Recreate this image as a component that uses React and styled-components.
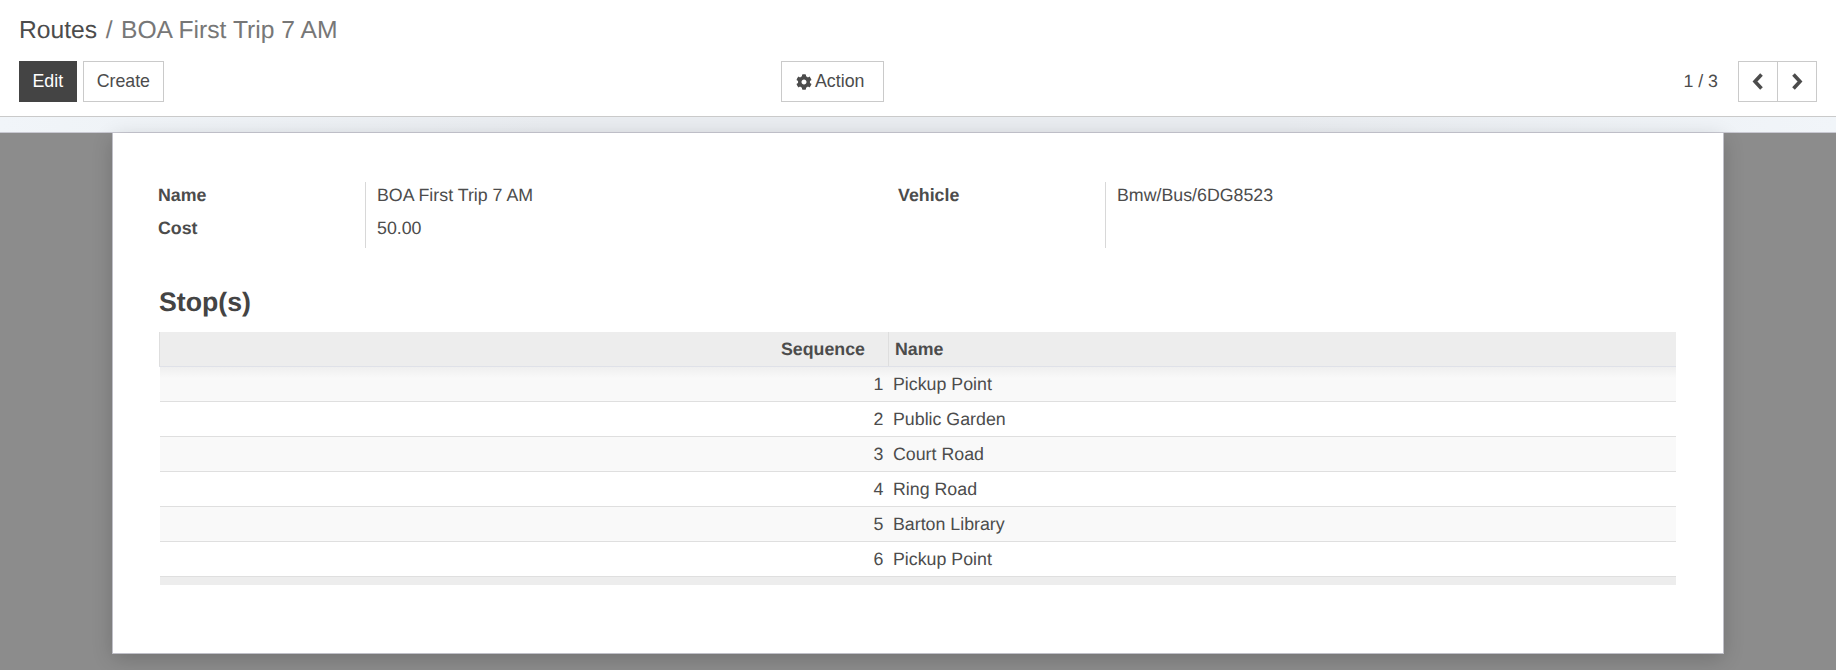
import styled, { createGlobalStyle } from "styled-components";
import { FaCog } from "react-icons/fa";

const GlobalStyle = createGlobalStyle`
  html, body {
    margin: 0;
    padding: 0;
    height: 100%;
    background: #8c8c8c;
    font-family: "Liberation Sans", Arial, sans-serif;
    color: #4c4c4c;
    text-rendering: geometricPrecision;
  }
`;

const Page = styled.div`
  width: 1836px;
  height: 670px;
  overflow: hidden;
  display: flex;
  flex-direction: column;
`;

const ControlPanel = styled.div`
  box-sizing: border-box;
  height: 117px;
  flex: none;
  background: #fff;
  border-bottom: 1px solid #cacaca;
  padding: 15px 19px 0;
`;

const Breadcrumb = styled.div`
  font-size: 24.67px;
  line-height: 32px;
  height: 46px;
  white-space: nowrap;
`;

const Crumb = styled.span`
  color: #4c4c4c;
`;

const Separator = styled.span`
  color: #777;
  padding: 0 8.5px;
`;

const Current = styled.span`
  color: #777;
`;

const Toolbar = styled.div`
  display: grid;
  grid-template-columns: 762px auto 1fr;
  align-items: center;
`;

const ButtonGroup = styled.div`
  display: flex;
  gap: 6px;
`;

const Button = styled.button`
  box-sizing: border-box;
  height: 41px;
  padding: 0 ${(p) => p.$padRight || 13}px 0 ${(p) => p.$padLeft || 13}px;
  font: inherit;
  font-size: 17.8px;
  border: 1px solid ${(p) => (p.$primary ? "#444" : "#cacaca")};
  background: ${(p) => (p.$primary ? "#444" : "#fff")};
  color: ${(p) => (p.$primary ? "#fff" : "#4c4c4c")};
  display: flex;
  align-items: center;
  gap: ${(p) => p.$gap || 4}px;
`;

const Pager = styled.div`
  display: flex;
  justify-content: flex-end;
  align-items: center;
  gap: 20px;
`;

const PagerValue = styled.div`
  font-size: 17.8px;
  white-space: nowrap;
`;

const PagerButtons = styled.div`
  display: flex;
`;

const PagerButton = styled.button`
  box-sizing: border-box;
  width: 40px;
  height: 41px;
  padding: 0;
  background: #fff;
  color: #4c4c4c;
  border: 1px solid #cacaca;
  display: flex;
  align-items: center;
  justify-content: center;
  & + & {
    margin-left: -1px;
  }
`;

const ContentArea = styled.div`
  flex: 1;
  display: flex;
  flex-direction: column;
`;

const TopBand = styled.div`
  box-sizing: border-box;
  height: 16px;
  flex: none;
  background: linear-gradient(90deg, #f1f5f9 0%, #e9ecf0 30%, #e9ecf0 70%, #f1f5f9 100%);
  border-bottom: 1px solid #c9c9d2;
`;

const Backdrop = styled.div`
  flex: 1;
  display: flex;
  justify-content: center;
  background: #8c8c8c;
`;

const Sheet = styled.div`
  box-sizing: border-box;
  width: 1612px;
  height: 521px;
  background: #fff;
  border: 1px solid #c0c0c8;
  border-top: none;
  box-shadow: 0 5px 20px -1px rgba(0, 0, 0, 0.2);
  padding: 49px 47px 0 45px;
`;

const FormGroups = styled.div`
  display: grid;
  grid-template-columns: 740px 1fr;
`;

const FieldGroup = styled.div`
  display: grid;
  grid-template-columns: 207px 1fr;
  grid-auto-rows: 33px;
  height: 66px;
`;

const FieldLabel = styled.div`
  font-size: 17.8px;
  font-weight: 700;
  line-height: 26px;
`;

const FieldValue = styled.div`
  font-size: 17.8px;
  line-height: 26px;
  padding-left: 11px;
  border-left: 1px solid #d8d8d8;
`;

const SectionTitle = styled.h2`
  margin: 36px 0 0 1px;
  font-size: 26.7px;
  line-height: 37px;
  height: 48px;
  font-weight: 700;
  color: #444;
`;

const Table = styled.table`
  width: 1517px;
  margin-left: 1px;
  border-collapse: collapse;
  table-layout: fixed;
  font-size: 17.8px;
`;

const HeadCell = styled.th`
  box-sizing: border-box;
  height: 34px;
  padding: 1px ${(p) => (p.$right ? 23 : 5)}px 0 6px;
  text-align: ${(p) => (p.$right ? "right" : "left")};
  font-weight: 700;
  background: #ededed;
  border-bottom: 1px solid #dfe1e8;
  border-left: 1px solid #dedede;
`;

const Row = styled.tr`
  background: ${(p) =>
    p.$first
      ? "linear-gradient(#eeeeee, #f9f9f9 12px)"
      : p.$striped
        ? "#f9f9f9"
        : "#fff"};
`;

const Cell = styled.td`
  box-sizing: border-box;
  height: 35px;
  padding: 1px ${(p) => (p.$right ? 5 : 4.5)}px 0;
  text-align: ${(p) => (p.$right ? "right" : "left")};
  border-bottom: 1px solid #dfdfdf;
`;

const TableFoot = styled.td`
  height: 8px;
  padding: 0;
  background: #ededed;
  border-top: 1px solid #dfe1e8;
`;

const stops = ["Pickup Point", "Public Garden", "Court Road", "Ring Road", "Barton Library", "Pickup Point"];

function Chevron({ d }) {
  return (
    <svg width="12" height="17" viewBox="0 0 12 17">
      <path d={d} fill="none" stroke="currentColor" strokeWidth="3.6" />
    </svg>
  );
}

export default function App() {
  return (
    <Page>
      <GlobalStyle />
      <ControlPanel>
        <Breadcrumb>
          <Crumb>Routes</Crumb>
          <Separator>/</Separator>
          <Current>BOA First Trip 7 AM</Current>
        </Breadcrumb>
        <Toolbar>
          <ButtonGroup>
            <Button $primary $padLeft={12.5} $padRight={12.5}>Edit</Button>
            <Button>Create</Button>
          </ButtonGroup>
          <Button $padLeft={14} $padRight={19} $gap={3}>
            <FaCog size={16} />
            Action
          </Button>
          <Pager>
            <PagerValue>1 / 3</PagerValue>
            <PagerButtons>
              <PagerButton aria-label="Previous">
                <Chevron d="M9.5 1.5 L3 8.5 L9.5 15.5" />
              </PagerButton>
              <PagerButton aria-label="Next">
                <Chevron d="M2.5 1.5 L9 8.5 L2.5 15.5" />
              </PagerButton>
            </PagerButtons>
          </Pager>
        </Toolbar>
      </ControlPanel>
      <ContentArea>
        <TopBand />
        <Backdrop>
          <Sheet>
            <FormGroups>
              <FieldGroup>
                <FieldLabel>Name</FieldLabel>
                <FieldValue>BOA First Trip 7 AM</FieldValue>
                <FieldLabel>Cost</FieldLabel>
                <FieldValue>50.00</FieldValue>
              </FieldGroup>
              <FieldGroup>
                <FieldLabel>Vehicle</FieldLabel>
                <FieldValue>Bmw/Bus/6DG8523</FieldValue>
                <FieldLabel />
                <FieldValue />
              </FieldGroup>
            </FormGroups>
            <SectionTitle>Stop(s)</SectionTitle>
            <Table>
              <colgroup>
                <col style={{ width: 729 }} />
                <col />
              </colgroup>
              <thead>
                <tr>
                  <HeadCell $right>Sequence</HeadCell>
                  <HeadCell>Name</HeadCell>
                </tr>
              </thead>
              <tbody>
                {stops.map((stop, i) => (
                  <Row key={i} $first={i === 0} $striped={i % 2 === 0}>
                    <Cell $right>{i + 1}</Cell>
                    <Cell>{stop}</Cell>
                  </Row>
                ))}
              </tbody>
              <tfoot>
                <tr>
                  <TableFoot colSpan={2} />
                </tr>
              </tfoot>
            </Table>
          </Sheet>
        </Backdrop>
      </ContentArea>
    </Page>
  );
}
